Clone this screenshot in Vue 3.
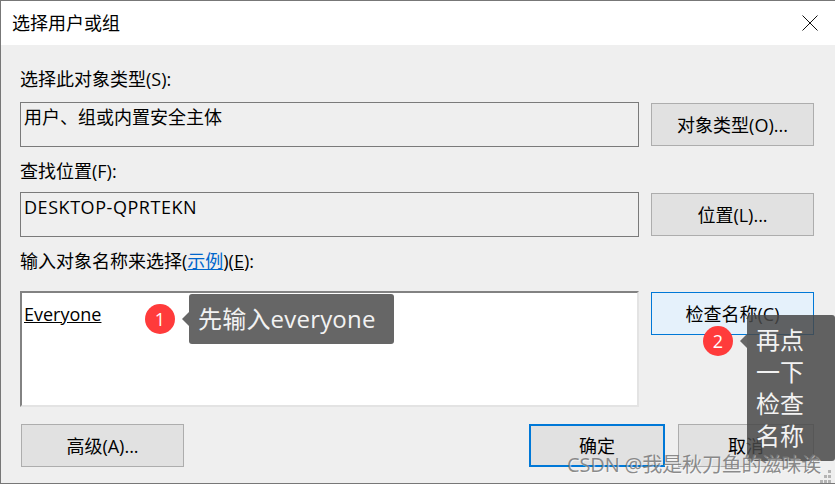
<script setup>
const fields = [
  { label: '选择此对象类型(S):', value: '用户、组或内置安全主体', button: '对象类型(O)...' },
  { label: '查找位置(F):', value: 'DESKTOP-QPRTEKN', button: '位置(L)...', caps: true },
]
const grip = [[8, 0], [4, 5], [8, 5], [0, 10], [4, 10], [8, 10]]
</script>

<template>
  <div class="dialog">
    <header class="titlebar">
      <span class="title">选择用户或组</span>
      <svg class="close" width="16" height="16" viewBox="0 0 16 16" aria-hidden="true">
        <path d="M0.5 0.5 L15.5 15.5 M15.5 0.5 L0.5 15.5" stroke="#111" stroke-width="1" fill="none" />
      </svg>
    </header>

    <main class="content">
      <section v-for="field in fields" :key="field.button" class="field">
        <label class="label">{{ field.label }}</label>
        <div class="row">
          <div class="readonly" :class="{ caps: field.caps }">{{ field.value }}</div>
          <button type="button" class="btn side">{{ field.button }}</button>
        </div>
      </section>

      <section class="field names">
        <label class="label">输入对象名称来选择(<a class="link">示例</a>)(<u>E</u>):</label>
        <div class="row top">
          <div class="listbox"><u>Everyone</u></div>
          <button type="button" class="btn side check">检查名称(C)</button>
        </div>
      </section>

      <footer class="actions">
        <button type="button" class="btn advanced">高级(A)...</button>
        <div class="confirm">
          <button type="button" class="btn small primary">确定</button>
          <button type="button" class="btn small">取消</button>
        </div>
      </footer>
    </main>

    <div class="step step-one">
      <span class="dot">1</span>
      <span class="tip">先输入everyone</span>
    </div>
    <div class="step step-two">
      <span class="dot">2</span>
      <span class="tip narrow">再点一下检查名称</span>
    </div>
    <div class="watermark">CSDN @我是秋刀鱼的滋味诶</div>
    <svg class="grip" width="11" height="13" viewBox="0 0 11 13" aria-hidden="true">
      <rect v-for="[x, y] in grip" :key="`${x}-${y}`" :x="x" :y="y" width="3" height="3" fill="#b4b4b4" />
    </svg>
  </div>
</template>

<style>
html,
body {
  background: #efefef;
  overflow: hidden;
}
</style>

<style scoped>
.dialog {
  position: relative;
  width: 835px;
  height: 484px;
  box-sizing: border-box;
  overflow: hidden;
  background: #efefef;
  border-top: 1px solid #777;
  border-left: 1px solid #777;
  border-bottom: 1px solid #777;
  color: #000;
  font-family: "Open Sans", "Noto Sans CJK SC", sans-serif;
  font-size: 18px;
}

.titlebar {
  display: flex;
  align-items: center;
  justify-content: space-between;
  height: 44px;
  padding: 0 17px 0 11px;
  background: #fff;
}

.title {
  line-height: 44px;
}

.content {
  padding: 21px 21px 0 19px;
}

.field {
  margin-bottom: 9px;
}

.label {
  display: block;
  height: 36px;
  line-height: 26px;
}

.field + .field .label {
  line-height: 30px;
}

.row {
  display: flex;
  align-items: center;
  justify-content: space-between;
}

.row.top {
  align-items: flex-start;
}

.readonly {
  box-sizing: border-box;
  width: 619px;
  height: 45px;
  padding: 0 3px;
  border: 1px solid #7a7a7a;
  line-height: 28px;
}

.caps {
  letter-spacing: 0.55px;
}

.listbox {
  box-sizing: border-box;
  width: 619px;
  height: 116px;
  padding: 7px 2px;
  background: #fff;
  border: 2px solid;
  border-color: #828282 #e3e3e3 #e3e3e3 #828282;
  line-height: 28px;
}

.btn {
  box-sizing: border-box;
  height: 43px;
  padding: 0 0 2px;
  background: #e1e1e1;
  border: 1px solid #adadad;
  color: #000;
  font: inherit;
}

.side {
  width: 163px;
}

.check {
  margin-top: 1px;
  background: #e5f1fb;
  border-color: #0078d7;
}

.names {
  margin-top: 10px;
  margin-bottom: 0;
}

.field.names .label {
  height: 44px;
  line-height: 28px;
}

.link {
  color: #0066cc;
  text-decoration: underline;
}

.actions {
  display: flex;
  justify-content: space-between;
  align-items: center;
  margin-top: 17px;
  padding-left: 1px;
}

.advanced {
  width: 163px;
}

.confirm {
  display: flex;
  gap: 13px;
}

.small {
  width: 136px;
}

.primary {
  border: 2px solid #0078d7;
}

.step {
  position: absolute;
  display: flex;
  align-items: center;
}

.step-one {
  left: 144px;
  top: 293px;
}

.step-two {
  left: 702px;
  top: 314px;
  align-items: flex-start;
}

.dot {
  flex: none;
  width: 30px;
  height: 30px;
  border-radius: 50%;
  background: #ff3b3b;
  color: #fff;
  font-size: 18px;
  line-height: 30px;
  text-align: center;
}

.step-two .dot {
  margin-top: 11px;
}

.tip {
  position: relative;
  box-sizing: border-box;
  width: 205px;
  margin-left: 14px;
  padding: 0 9px;
  height: 50px;
  background: #666;
  border-radius: 3px;
  color: #f2f2f2;
  font-size: 24px;
  letter-spacing: 0.2px;
  line-height: 50px;
  white-space: nowrap;
}

.tip::before {
  content: "";
  position: absolute;
  left: -7px;
  top: 18px;
  border-top: 7px solid transparent;
  border-bottom: 7px solid transparent;
  border-right: 7px solid #666;
}

.narrow {
  width: 88px;
  height: 146px;
  padding: 9px;
  background: rgba(72, 72, 72, 0.85);
  letter-spacing: 0;
  line-height: 32px;
  white-space: normal;
}

.narrow::before {
  top: 19px;
  border-right-color: #666;
}

.watermark {
  position: absolute;
  left: 566px;
  top: 452px;
  color: rgba(120, 120, 120, 0.85);
  font-size: 20px;
  letter-spacing: -0.15px;
  line-height: 24px;
  white-space: nowrap;
  text-shadow: 1px 1px 0 rgba(255, 255, 255, 0.5);
}

.grip {
  position: absolute;
  left: 819px;
  top: 469px;
}
</style>
